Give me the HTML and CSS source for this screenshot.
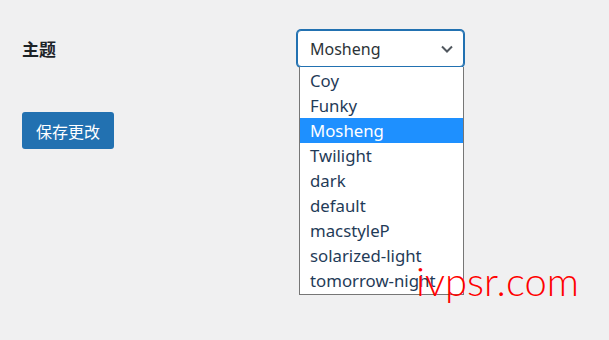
FILE: index.html
```html
<!DOCTYPE html>
<html lang="zh-CN">

<head>
    <meta charset="UTF-8">
    <meta name="viewport" content="width=device-width, initial-scale=1.0">
    <title>主题</title>
    <link rel="stylesheet" href="styles.css">
</head>

<body>
    <div class="wrap">
        <div class="side">
            <div class="label">主题</div>
            <button class="button">保存更改</button>
        </div>
        <div class="field">
            <div class="select">
                <span>Mosheng</span>
                <svg class="arrow" width="16" height="16" viewBox="0 0 16 16">
                    <path d="M3 5.5 L8 10.5 L13 5.5" fill="none" stroke="#50575e" stroke-width="2"/>
                </svg>
            </div>
            <ul class="options">
                <li>Coy</li>
                <li>Funky</li>
                <li class="active">Mosheng</li>
                <li>Twilight</li>
                <li>dark</li>
                <li>default</li>
                <li>macstyleP</li>
                <li>solarized-light</li>
                <li>tomorrow-night</li>
            </ul>
        </div>
    </div>

    <div class="mark">ivpsr.com</div>
</body>

</html>
```

FILE: styles.css
```css
body {
    margin: 0;
    background: #f0f0f1;
    font-family: "Noto Sans", "Noto Sans CJK SC", sans-serif;
    color: #1d2327;
}

.wrap {
    display: flex;
    align-items: flex-start;
    padding: 30px 22px 0 22px;
}

.side {
    width: 275px;
    display: flex;
    flex-direction: column;
    align-items: flex-start;
}

.label {
    padding-top: 8px;
    font-family: "Noto Sans CJK SC", sans-serif;
    font-size: 17px;
    font-weight: 700;
    line-height: 22px;
}

.field {
    display: flex;
    flex-direction: column;
}

.select {
    box-sizing: border-box;
    width: 167px;
    height: 37px;
    border: 1px solid #2271b1;
    border-radius: 4px;
    background: #fff;
    display: flex;
    align-items: center;
    justify-content: space-between;
    padding: 0 8px 0 12px;
    font-size: 16px;
    color: #2c3338;
    box-shadow: 0 0 0 1px #2271b1;
}

.arrow {
    display: block;
}

.options {
    box-sizing: border-box;
    width: 165px;
    margin: 0 0 0 2px;
    padding: 1px 0 1px 0;
    list-style: none;
    background: #fff;
    border: 1px solid #767676;
    border-top: none;
}

.options li {
    height: 25px;
    line-height: 25px;
    padding-left: 10px;
    font-size: 16.8px;
    color: #1f3b58;
}

.options li.active {
    background: #1e90ff;
    color: #fff;
}

.button {
    margin-top: 52px;
    width: 92px;
    height: 37px;
    border: none;
    border-radius: 3px;
    background: #2271b1;
    color: #fff;
    font-family: "Noto Sans CJK SC", sans-serif;
    font-size: 16px;
    padding: 0;
}

.mark {
    position: absolute;
    left: 416px;
    top: 257px;
    font-family: "Lato", sans-serif;
    font-weight: 300;
    font-size: 40px;
    color: #ff0000;
}
```
